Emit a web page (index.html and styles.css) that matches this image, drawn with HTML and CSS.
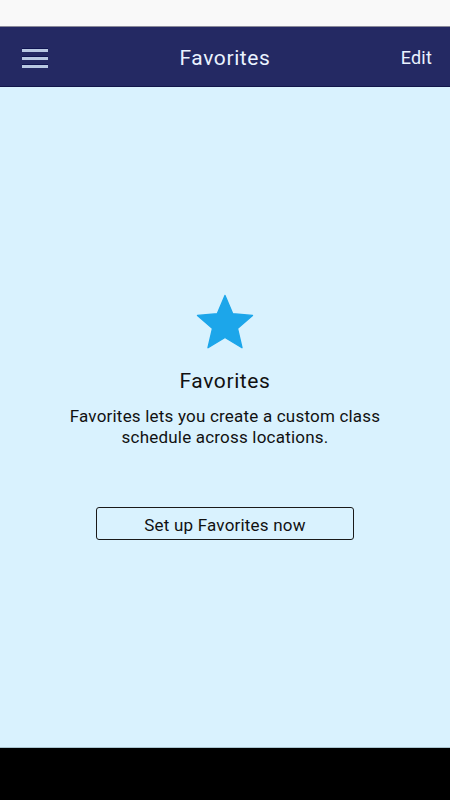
FILE: index.html
```html
<!DOCTYPE html>
<html lang="en">
<head>
<meta charset="utf-8">
<title>Favorites</title>
<link rel="stylesheet" href="styles.css">
</head>
<body>
<div class="app">
  <div class="statusbar"></div>
  <header class="navbar">
    <button class="menu" aria-label="Menu">
      <span class="bar"></span><span class="bar"></span><span class="bar"></span>
    </button>
    <h1 class="nav-title">Favorites</h1>
    <button class="edit">Edit</button>
  </header>
  <main class="content">
    <svg class="star" viewBox="0 0 24 24" width="66" height="66" aria-hidden="true">
      <path d="M12 17.27L18.18 21l-1.64-7.03L22 9.24l-7.19-.61L12 2 9.19 8.63 2 9.24l5.46 4.73L5.82 21z" fill="#1ca6ea" stroke="#1ca6ea" stroke-width="0.5" stroke-linejoin="round"/>
    </svg>
    <h2 class="heading">Favorites</h2>
    <p class="desc">Favorites lets you create a custom class<br>schedule across locations.</p>
    <button class="setup">Set up Favorites now</button>
  </main>
  <div class="navfooter"></div>
</div>
</body>
</html>
```

FILE: styles.css
```css
* { box-sizing: border-box; }
html, body { margin: 0; padding: 0; }
body {
  width: 450px;
  height: 800px;
  font-family: Roboto, "Noto Sans", sans-serif;
  overflow: hidden;
}
.app {
  display: flex;
  flex-direction: column;
  height: 800px;
}
.statusbar {
  height: 27px;
  background: #f9f9f9;
  border-bottom: 1px solid #8a8a9a;
  flex: none;
}
.navbar {
  height: 60px;
  flex: none;
  background: #242963;
  border-bottom: 1px solid #12164a;
  display: flex;
  align-items: center;
  justify-content: space-between;
  padding: 0 18px 0 22px;
  position: relative;
}
.menu {
  width: 26px;
  height: 20px;
  padding: 0;
  border: 0;
  background: transparent;
  display: flex;
  flex-direction: column;
  justify-content: space-between;
  margin-top: 2px;
}
.bar {
  display: block;
  height: 4px;
  width: 26px;
  background: #b8c8e2;
  border-top: 1px solid #0f1450;
}
.nav-title {
  position: absolute;
  left: 0;
  right: 0;
  top: 19px;
  text-align: center;
  margin: 0;
  font-size: 21px;
  line-height: 25px;
  letter-spacing: 0.6px;
  font-weight: 400;
  color: #eaf2ff;
  pointer-events: none;
}
.edit {
  border: 0;
  background: transparent;
  padding: 0;
  font-family: inherit;
  font-size: 18px;
  letter-spacing: 0.2px;
  color: #eaf2ff;
  margin-top: 1px;
}
.content {
  flex: 1;
  background: #d9f2fe;
  border-bottom: 1px solid #a9c4cf;
  display: flex;
  flex-direction: column;
  align-items: center;
  padding-top: 203px;
}
.star {
  display: block;
}
.heading {
  margin: 13px 0 0;
  font-size: 21px;
  letter-spacing: 0.6px;
  line-height: 25px;
  font-weight: 400;
  color: #111;
}
.desc {
  margin: 12px 0 0;
  font-size: 17px;
  letter-spacing: 0.2px;
  line-height: 21px;
  text-align: center;
  color: #111;
}
.setup {
  margin-top: 59px;
  width: 258px;
  height: 33px;
  background: transparent;
  border: 1px solid #1a1a1a;
  border-radius: 3px;
  font-family: inherit;
  font-size: 17px;
  letter-spacing: 0.2px;
  color: #111;
  padding: 2px 0 0;
}
.navfooter {
  height: 52px;
  flex: none;
  background: #000;
}
```
